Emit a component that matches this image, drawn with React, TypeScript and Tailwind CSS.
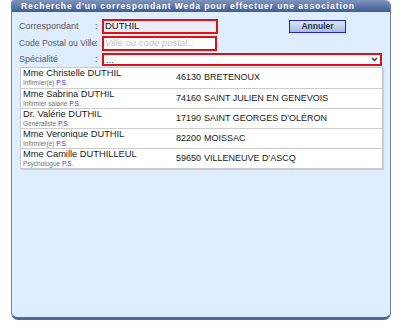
import React from 'react';

const results = [
  { name: 'Mme Christelle DUTHIL', spec: 'Infirmier(e)', cp: '46130', city: 'BRETENOUX' },
  { name: 'Mme Sabrina DUTHIL', spec: 'Infirmier salarié', cp: '74160', city: 'SAINT JULIEN EN GENEVOIS' },
  { name: 'Dr. Valérie DUTHIL', spec: 'Généraliste', cp: '17190', city: "SAINT GEORGES D'OLÉRON" },
  { name: 'Mme Veronique DUTHIL', spec: 'Infirmier(e)', cp: '82200', city: 'MOISSAC' },
  { name: 'Mme Camille DUTHILLEUL', spec: 'Psychologue', cp: '59650', city: "VILLENEUVE D'ASCQ" },
];

const App = () => {
  return (
    <div className="w-[400px] h-[336px] bg-white pl-[11px] pr-[9px] font-['Liberation_Sans',sans-serif]">
      <div className="h-[320px] flex flex-col bg-[#deedff] border-l border-r border-[#6a80ac] border-b-[3px] border-b-[#4e67a0] rounded-b-[7px] rounded-tr-[6px] rounded-tl-[3px] overflow-hidden">
        {/* title bar */}
        <div className="h-[12px] bg-gradient-to-b from-[#8095bd] to-[#3f5b92] pl-[9px] flex items-center">
          <span className="text-white text-[8.5px] font-bold tracking-[0.9px] leading-none">
            Recherche d'un correspondant Weda pour effectuer une association
          </span>
        </div>

        <div className="flex flex-col pl-[7px] pr-[8px] pt-[6px]">
          <div className="flex">
            <div className="flex flex-col">
              <div className="flex items-center h-[17px]">
                <span className="w-[76px] text-[9px] text-[#5a5a5a]">Correspondant</span>
                <span className="w-[7px] text-[9px] text-[#5a5a5a]">:</span>
                <div className="w-[116px] h-[15px] border-2 border-[#e01010] bg-[#eeeefa] flex items-center px-[1px] text-[9.5px] text-[#111]">
                  DUTHIL
                </div>
              </div>
              <div className="flex items-center h-[17px]">
                <span className="w-[76px] text-[8.6px] text-[#5a5a5a] whitespace-nowrap">Code Postal ou Ville</span>
                <span className="w-[7px] text-[9px] text-[#5a5a5a]">:</span>
                <div className="w-[115px] h-[15px] border-2 border-[#e01010] bg-white flex items-center px-[1px] text-[9.5px] italic text-[#c0c0c8]">
                  Ville ou code postal...
                </div>
              </div>
            </div>
            <div className="flex-1 flex justify-end pr-[36px] pt-[2px]">
              <button className="w-[57px] h-[13px] border border-[#2028c8] bg-gradient-to-b from-[#dce6f6] to-[#a9bde0] text-[8.5px] font-bold text-[#2a3550] leading-none">
                Annuler
              </button>
            </div>
          </div>

          <div className="flex items-center h-[15px]">
            <span className="w-[76px] text-[9px] text-[#5a5a5a]">Spécialité</span>
            <span className="w-[7px] text-[9px] text-[#5a5a5a]">:</span>
            <div className="flex-1 h-[13px] border-2 border-[#e01010] bg-white flex items-center justify-between px-[2px] text-[9.5px] text-[#111] leading-none">
              <span>...</span>
              <svg width="7" height="5" viewBox="0 0 7 5">
                <path d="M1 1 L3.5 3.5 L6 1" stroke="#333" strokeWidth="1.3" fill="none" />
              </svg>
            </div>
          </div>

          <div className="ml-[1px] w-[363px] bg-white border border-[#c8c8c8] shadow-[1px_1px_1px_rgba(0,0,0,0.12)]">
            {results.map((r, i) => (
              <div
                key={i}
                className={`h-[20px] flex items-center pl-[2px] ${i > 0 ? 'border-t border-[#cdcdcd]' : ''}`}
              >
                <div className="w-[153px] flex flex-col leading-none">
                  <span className="text-[9.3px] text-[#1a1a1a]">{r.name}</span>
                  <span className="text-[6.5px] text-[#707070] mt-[2px]">
                    {r.spec} <span className="text-[#3030e0]">P.S.</span>
                  </span>
                </div>
                <span className="w-[28px] text-[9px] text-[#1a1a1a]">{r.cp}</span>
                <span className="text-[9px] text-[#1a1a1a]">{r.city}</span>
              </div>
            ))}
          </div>
        </div>
      </div>
    </div>
  );
};

export default App;
